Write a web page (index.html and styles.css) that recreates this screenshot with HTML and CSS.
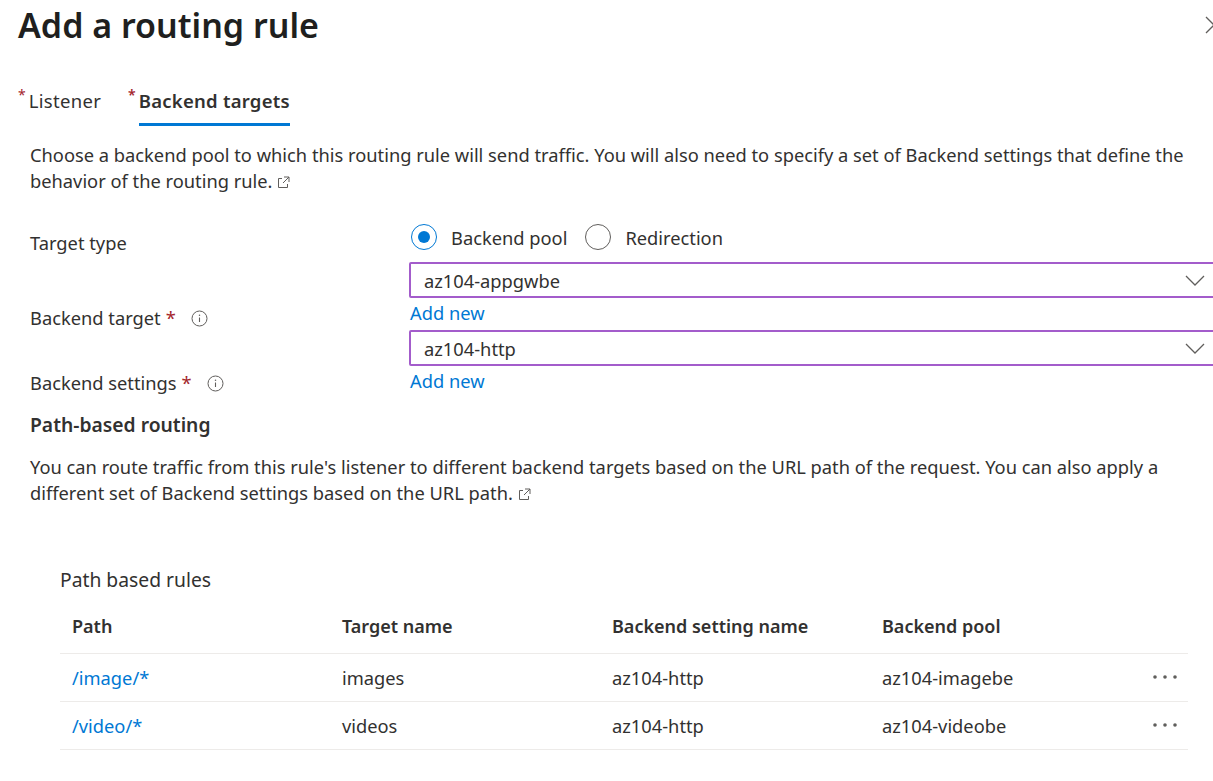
FILE: index.html
```html
<!DOCTYPE html>
<html lang="en">
<head>
<meta charset="utf-8">
<title>Add a routing rule</title>
<link rel="stylesheet" href="styles.css">
</head>
<body>
<div class="panel">
  <header class="header">
    <h1 class="title">Add a routing rule</h1>
    <svg class="close" width="18" height="18" viewBox="0 0 18 18"><path d="M1 1 L17 17 M17 1 L1 17" stroke="#605e5c" stroke-width="1.3" fill="none"/></svg>
  </header>

  <nav class="tabs">
    <div class="tab"><span class="req">*</span><span class="tab-label">Listener</span></div>
    <div class="tab active"><span class="req">*</span><span class="tab-label">Backend targets</span></div>
  </nav>

  <div class="content">
    <p class="desc">Choose a backend pool to which this routing rule will send traffic. You will also need to specify a set of Backend settings that define the behavior of the routing rule.<svg class="ext" width="13" height="13" viewBox="0 0 13 13"><path d="M5 2.5 H1.5 V11.5 H10.5 V8 M7 1 H12 V6 M12 1 L6 7" stroke="#605e5c" stroke-width="1" fill="none"/></svg></p>

    <div class="form">
      <div class="row row-radio">
        <div class="label">Target type</div>
        <div class="radios">
          <label class="radio"><span class="dot on"></span>Backend pool</label>
          <label class="radio"><span class="dot"></span>Redirection</label>
        </div>
      </div>

      <div class="row row-select">
        <div class="label">Backend target <span class="star">*</span>
          <svg class="info" width="17" height="17" viewBox="0 0 17 17"><circle cx="8.5" cy="8.5" r="7.5" stroke="#605e5c" stroke-width="1" fill="none"/><path d="M8.5 7.5 V12" stroke="#605e5c" stroke-width="1.1"/><circle cx="8.5" cy="5.3" r="0.75" fill="#605e5c"/></svg>
        </div>
        <div class="control">
          <div class="select"><span>az104-appgwbe</span><svg class="chev" width="20" height="11" viewBox="0 0 20 11"><path d="M1 1 L10 10 L19 1" stroke="#605e5c" stroke-width="1.3" fill="none"/></svg></div>
          <a class="link add">Add new</a>
        </div>
      </div>

      <div class="row row-select second">
        <div class="label">Backend settings <span class="star">*</span>
          <svg class="info" width="17" height="17" viewBox="0 0 17 17"><circle cx="8.5" cy="8.5" r="7.5" stroke="#605e5c" stroke-width="1" fill="none"/><path d="M8.5 7.5 V12" stroke="#605e5c" stroke-width="1.1"/><circle cx="8.5" cy="5.3" r="0.75" fill="#605e5c"/></svg>
        </div>
        <div class="control">
          <div class="select"><span>az104-http</span><svg class="chev" width="20" height="11" viewBox="0 0 20 11"><path d="M1 1 L10 10 L19 1" stroke="#605e5c" stroke-width="1.3" fill="none"/></svg></div>
          <a class="link add">Add new</a>
        </div>
      </div>
    </div>

    <h2 class="section">Path-based routing</h2>
    <p class="desc desc2">You can route traffic from this rule's listener to different backend targets based on the URL path of the request. You can also apply a different set of Backend settings based on the URL path.<svg class="ext" width="13" height="13" viewBox="0 0 13 13"><path d="M5 2.5 H1.5 V11.5 H10.5 V8 M7 1 H12 V6 M12 1 L6 7" stroke="#605e5c" stroke-width="1" fill="none"/></svg></p>

    <div class="rules">
      <div class="rules-title">Path based rules</div>
      <table class="grid">
        <thead>
          <tr><th>Path</th><th>Target name</th><th>Backend setting name</th><th>Backend pool</th><th class="more-col"></th></tr>
        </thead>
        <tbody>
          <tr><td><a class="link">/image/*</a></td><td>images</td><td>az104-http</td><td>az104-imagebe</td><td class="more-col"><svg class="more" width="26" height="6" viewBox="0 0 26 6"><circle cx="3" cy="3" r="1.8" fill="#605e5c"/><circle cx="13" cy="3" r="1.8" fill="#605e5c"/><circle cx="23" cy="3" r="1.8" fill="#605e5c"/></svg></td></tr>
          <tr><td><a class="link">/video/*</a></td><td>videos</td><td>az104-http</td><td>az104-videobe</td><td class="more-col"><svg class="more" width="26" height="6" viewBox="0 0 26 6"><circle cx="3" cy="3" r="1.8" fill="#605e5c"/><circle cx="13" cy="3" r="1.8" fill="#605e5c"/><circle cx="23" cy="3" r="1.8" fill="#605e5c"/></svg></td></tr>
        </tbody>
      </table>
    </div>
  </div>
</div>
</body>
</html>
```

FILE: styles.css
```css
* { box-sizing: border-box; }
html, body { margin: 0; padding: 0; background: #ffffff; }
body {
  font-family: "Noto Sans", "Open Sans", sans-serif;
  color: #323130;
  font-size: 18.3px;
  overflow: hidden;
  width: 1213px;
  height: 781px;
}
.panel { width: 1213px; }

.header {
  display: flex;
  justify-content: space-between;
  align-items: center;
  padding-left: 18px;
  height: 50px;
}
.title {
  margin: 0;
  font-size: 34px;
  font-weight: 600;
  color: #201f1e;
  line-height: 50px;
}
.close { margin-right: -10px; margin-top: 0; }

.tabs {
  display: flex;
  gap: 27px;
  padding-left: 18px;
  margin-top: 33px;
  height: 43px;
}
.tab {
  font-size: 18.5px;
  line-height: 36px;
  color: #323130;
  display: flex;
  align-items: flex-start;
  letter-spacing: 0.3px;
}
.tab .req { color: #a4262c; font-size: 14px; line-height: 24px; margin-right: 3px; letter-spacing: 0; }
.tab.active { font-weight: 600; letter-spacing: 0.25px; }
.tab.active .tab-label { border-bottom: 3px solid #0078d4; height: 43px; }

.content { padding-left: 30px; padding-right: 14px; }

.desc {
  margin: 16px 0 0 0;
  line-height: 26px;
}
.ext { margin-left: 5px; vertical-align: -1px; }

.form { margin-top: 26px; width: 1183px; }
.row {
  display: grid;
  grid-template-columns: 379px 1fr;
  align-items: end;
}
.label { display: flex; align-items: center; line-height: 26px; }
.star { color: #a4262c; margin-left: 5px; }
.info { margin-left: 15px; }

.row-radio { height: 36px; }
.radios { display: flex; flex-direction: row; gap: 18px; align-items: center; height: 30px; margin-left: 2px; margin-bottom: 4px; }
.radio { display: flex; align-items: center; gap: 14px; }
.dot {
  width: 26px; height: 26px; border-radius: 50%;
  border: 1.5px solid #605e5c;
  display: inline-flex; align-items: center; justify-content: center;
}
.dot.on { border-color: #0078d4; }
.dot.on::after { content: ""; width: 12px; height: 12px; border-radius: 50%; background: #0078d4; }

.row-select { margin-top: 6px; }
.row-select.second { margin-top: 4px; }
.row-select .label { margin-bottom: -5px; }
.row-select.second .label { margin-bottom: -2px; }
.control { display: flex; flex-direction: column; align-items: flex-start; }
.select {
  height: 36px;
  border: 2px solid #a35ccb;
  border-radius: 2px;
  display: flex;
  align-items: center;
  justify-content: space-between;
  padding: 0 12px 0 13px;
  margin-right: -40px;
  width: calc(100% + 40px);
}
.select .chev { margin-right: 34px; }
.link { color: #0078d4; text-decoration: none; }
.add { line-height: 26px; margin-left: 1px; padding-top: 2px; }

.section {
  margin: 18px 0 0 0;
  font-size: 19.3px;
  font-weight: 600;
  line-height: 26px;
}
.desc2 { margin-top: 16px; }

.rules { margin-top: 61px; padding-left: 30px; width: 1158px; }
.rules-title { line-height: 26px; font-size: 19.3px; }
.grid {
  width: 1128px;
  border-collapse: collapse;
  margin-top: 7px;
  table-layout: fixed;
}
.grid th, .grid td {
  text-align: left;
  padding: 0 12px;
  border-bottom: 1px solid #edebe9;
}
.grid th { font-weight: 600; height: 53px; font-size: 18px; vertical-align: middle; }
.grid td { height: 48px; }
.grid th:nth-child(1), .grid th:nth-child(2), .grid th:nth-child(3), .grid th:nth-child(4) { width: 270px; }
.more-col { width: 48px; }
.more { display: block; margin-left: 0; }
```
